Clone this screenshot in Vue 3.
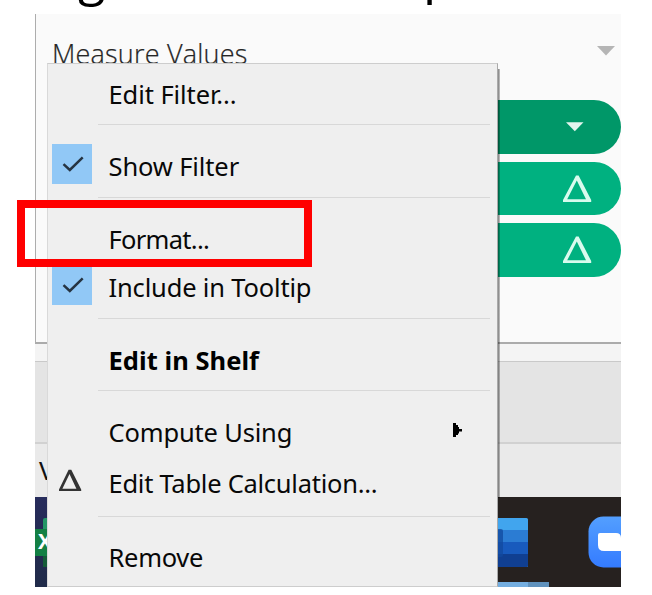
<script setup>
const groups = [
  [{ text: 'Edit Filter...', ls: -0.08 }],
  [{ text: 'Show Filter', ls: -0.12, icon: 'check' }],
  [{ text: 'Format...', ls: -0.7 }, { text: 'Include in Tooltip', ls: -0.17, icon: 'check' }],
  [{ text: 'Edit in Shelf', ls: 0.05, bold: true }],
  [{ text: 'Compute Using', ls: -0.17, sub: true }, { text: 'Edit Table Calculation...', ls: -0.26, icon: 'delta' }],
  [{ text: 'Remove', ls: -0.3 }],
]
</script>

<template>
  <div class="page">
    <div class="heading"><span class="g">g</span><span class="p">p</span></div>

    <div class="capture">
      <section class="card">
        <header class="card-head">
          <span class="title">Measure Values</span>
          <svg class="caret" width="18" height="10" viewBox="0 0 18 10"><path d="M0 0h18L9 9.5z" fill="#b5b5b5" /></svg>
        </header>
        <div class="pills">
          <div class="pill dark">
            <svg width="18" height="10" viewBox="0 0 18 10"><path d="M0 .3h17.5L8.8 9.3z" fill="#e2f5ee" /></svg>
          </div>
          <div v-for="n in 2" :key="n" class="pill">
            <svg width="30" height="28" viewBox="0 0 30 28"><path fill-rule="evenodd" d="M14 .6h2.600L29.200 25v2H1v-2zM14.800 5.500 5.200 24.300h18.800z" fill="#d9fbee" /></svg>
          </div>
        </div>
      </section>
      <div class="gap"></div>
      <div class="band"></div>
      <div class="status"><span>V</span></div>
      <div class="taskbar">
        <svg width="586" height="90" viewBox="0 0 586 90">
          <defs>
            <linearGradient id="zoomBlue" x1="0" y1="0" x2="0" y2="1"><stop offset="0" stop-color="#539fff" /><stop offset="1" stop-color="#347bff" /></linearGradient>
            <linearGradient id="navy" x1="0" y1="0" x2="0" y2="1"><stop offset="0" stop-color="#272c5c" /><stop offset="1" stop-color="#202b49" /></linearGradient>
          </defs>
          <rect width="13" height="90" fill="url(#navy)" />
          <rect x="8" y="21" width="20" height="49" rx="2" fill="#239766" />
          <rect x="8" y="58" width="20" height="12" fill="#155c38" />
          <rect x="0" y="32" width="20" height="27" fill="#138044" />
          <text x="3" y="52" class="xl">X</text>
          <rect x="440" y="21" width="53" height="49" rx="1.5" fill="#41a5ee" />
          <rect x="440" y="33" width="53" height="12" fill="#2b7cd3" />
          <rect x="440" y="45" width="53" height="12" fill="#185abd" />
          <path d="M440 57h53v11.500q0 1.500-1.500 1.500H440z" fill="#103f91" />
          <rect x="440" y="32" width="28" height="28" rx="2" fill="#11499f" fill-opacity=".75" />
          <rect x="440" y="85" width="53" height="5" fill="#74aee0" />
          <rect x="493" y="85" width="21" height="5" fill="#6092bd" />
          <rect x="553.500" y="19.500" width="52" height="51" rx="15" fill="url(#zoomBlue)" />
          <path d="M565 36h16q5 0 5 5v13h-17q-6 0-6-6V38q0-2 2-2z" fill="#fff" />
        </svg>
      </div>
    </div>

    <div class="menu">
      <div v-for="(group, i) in groups" :key="i" class="group">
        <div v-for="item in group" :key="item.text" class="item" :class="{ bold: item.bold, delta: item.icon === 'delta' }">
          <span class="icon" :class="item.icon === 'check' && 'check'">
            <svg v-if="item.icon === 'check'" width="40" height="40" viewBox="0 0 40 40"><path d="M11.500 20.200 17.800 26 30.700 13.400" fill="none" stroke="#263442" stroke-width="2.500" /></svg>
            <svg v-if="item.icon === 'delta'" width="24" height="23" viewBox="0 0 24 23"><path fill-rule="evenodd" d="M10.600.8h2.700L23.200 20.500V22H1v-1.500zM11.500 5 4.400 19.800h14z" fill="#333" /></svg>
          </span>
          <span class="label" :style="{ letterSpacing: item.ls + 'px' }">{{ item.text }}</span>
          <svg v-if="item.sub" class="arrow" width="9" height="14" viewBox="0 0 9 14"><path d="M0 0h3v2h2v2h1v2h3v2.500H6v2H5v1.500H3v2H0z" /></svg>
        </div>
      </div>
    </div>

    <div class="highlight"></div>
  </div>
</template>

<style>
body { margin: 0; background: #fff; overflow: hidden; }
</style>

<style scoped>
* { box-sizing: border-box; }
svg { display: block; flex: none; }
.page { position: relative; width: 652px; height: 595px; overflow: hidden; background: #fff; font-family: "Noto Sans", "Open Sans", sans-serif; }
.heading { position: absolute; left: 0; top: 0; width: 652px; height: 10px; overflow: hidden; color: #000; }
.heading span { position: absolute; }
.g { left: 78px; top: -54px; font: 50px/60px "Open Sans", sans-serif; }
.p { left: 424px; top: -52px; font: 50px/60px "Liberation Sans", sans-serif; }
.capture { position: absolute; left: 35px; top: 14px; width: 586px; height: 573px; overflow: hidden; display: flex; flex-direction: column; }
.card { height: 330px; background: #fafafa; border-left: 1px solid #adadad; border-bottom: 2px solid #ababab; }
.card-head { height: 86px; display: flex; justify-content: space-between; align-items: flex-start; padding: 20px 6px 0 16px; }
.title { font: 300 27px/40px "Open Sans", "Noto Sans", sans-serif; letter-spacing: .2px; color: #222; -webkit-text-stroke: .25px #333; white-space: nowrap; }
.caret { margin-top: 12px; }
.pills { display: flex; flex-direction: column; gap: 8px; padding-left: 20px; }
.pill { height: 53.700px; background: #00b180; border-radius: 0 27px 27px 0; display: flex; align-items: center; justify-content: flex-end; padding-right: 29px; }
.pill.dark { background: #009768; padding-right: 37px; }
.gap { height: 17px; background: #f4f4f4; }
.band { height: 83px; background: #e4e4e4; border-top: 1px solid #c9c9c9; border-bottom: 2px solid #d1d1d1; }
.status { height: 53px; background: #eaeaea; padding: 6px 0 0 4px; font-size: 26px; line-height: 40px; color: #111; }
.taskbar { height: 90px; background: #26211f; }
.xl { font: bold 21px "Open Sans", sans-serif; fill: #fff; }
.menu { position: absolute; left: 47px; top: 63px; width: 451px; height: 524px; padding: 7px 7px 0 4px; background: #efefef; border: 1px solid #cdcdcd; border-left-color: #d9d9d9; border-right-color: #aaa; }
.menu::after { content: ""; position: absolute; left: 450px; top: 5px; width: 2px; height: 429px; background: linear-gradient(90deg, rgba(0,0,0,.5), rgba(0,0,0,.2)); }
.group + .group { margin-top: 5.400px; padding-top: 19px; }
.group + .group::before { content: ""; display: block; height: 1px; margin: -19px 0 18px 46px; background: #d8d8d8; }
.item { height: 48px; display: flex; align-items: center; color: #080808; font-size: 25.500px; white-space: nowrap; }
.item + .item { margin-top: .6px; }
.item.item.delta { margin: 3px 0 7.400px; }
.icon { width: 40px; height: 40px; display: flex; align-items: center; justify-content: center; margin-right: 16.500px; }
.check { background: #91c8f6; position: relative; top: -3px; }
.delta > .icon { padding: 0 4px 8px 0; }
.label { flex: 1; padding-bottom: 2.500px; }
.bold { font-weight: 700; color: #000; }
.arrow { margin: -6px 28px 0 0; }
.highlight { position: absolute; left: 17px; top: 200px; width: 295px; height: 67px; border: 8px solid #f00; }
</style>
